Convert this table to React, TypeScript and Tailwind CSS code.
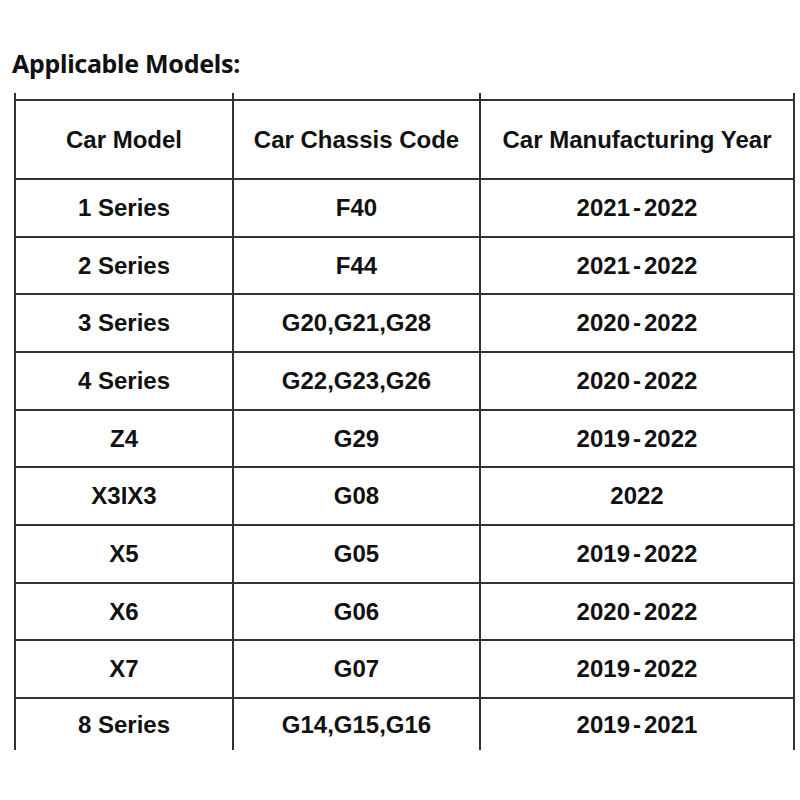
const rows = [
  { model: '1 Series', code: 'F40', year: '2021-2022' },
  { model: '2 Series', code: 'F44', year: '2021-2022' },
  { model: '3 Series', code: 'G20,G21,G28', year: '2020-2022' },
  { model: '4 Series', code: 'G22,G23,G26', year: '2020-2022' },
  { model: 'Z4', code: 'G29', year: '2019-2022' },
  { model: 'X3IX3', code: 'G08', year: '2022' },
  { model: 'X5', code: 'G05', year: '2019-2022' },
  { model: 'X6', code: 'G06', year: '2020-2022' },
  { model: 'X7', code: 'G07', year: '2019-2022' },
  { model: '8 Series', code: 'G14,G15,G16', year: '2019-2021' },
];

const heights = ['h-[58px]', 'h-[57px]', 'h-[58px]', 'h-[58px]', 'h-[57px]', 'h-[58px]', 'h-[58px]', 'h-[57px]', 'h-[58px]', 'h-[53px]'];

const cell = 'flex items-center justify-center border-l-2 border-[#333]';

// years are set with a little air round the dash, as in the source sheet
const Year = ({ value }: { value: string }) => {
  const [from, to] = value.split('-');
  if (!to) return <>{from}</>;
  return (
    <>
      {from}
      <span className="mx-[3px]">-</span>
      {to}
    </>
  );
};

export default function App() {
  return (
    <div className="w-[800px] h-[800px] bg-white text-[#111] font-['Noto_Sans',sans-serif] overflow-hidden">
      <h1 className="pl-[12px] pt-[46px] text-[25px] font-bold leading-[34px] tracking-[-0.3px]">Applicable Models:</h1>

      <div className="ml-[14px] mt-[13px] w-[781px] grid grid-cols-[218px_247px_316px] text-[24px] font-bold font-['Liberation_Sans',Arial,sans-serif]">
        {/* tick marks above the top rule */}
        <div className="h-[6px] border-l-2 border-[#333]" />
        <div className="h-[6px] border-l-2 border-[#333]" />
        <div className="h-[6px] border-l-2 border-r-2 border-[#333]" />

        <div className={`${cell} h-[79px] border-t-2`}>Car Model</div>
        <div className={`${cell} h-[79px] border-t-2`}>Car Chassis Code</div>
        <div className={`${cell} h-[79px] border-t-2 border-r-2`}>Car Manufacturing Year</div>

        {rows.map((r, i) => (
          <div key={r.model} className="contents">
            <div className={`${cell} ${heights[i]} border-t-2`}>{r.model}</div>
            <div className={`${cell} ${heights[i]} border-t-2`}>{r.code}</div>
            <div className={`${cell} ${heights[i]} border-t-2 border-r-2`}>
              <Year value={r.year} />
            </div>
          </div>
        ))}
      </div>
    </div>
  );
}
